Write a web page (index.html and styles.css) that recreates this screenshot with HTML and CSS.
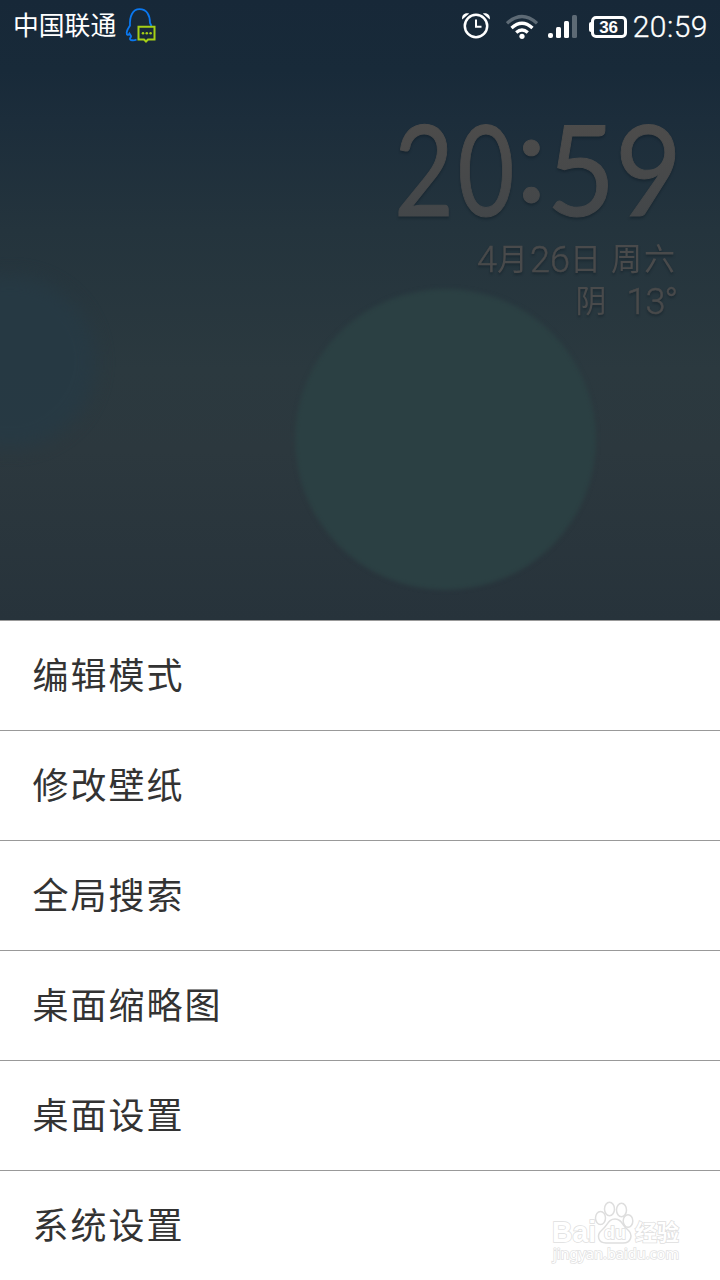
FILE: index.html
```
<!DOCTYPE html>
<html lang="zh-CN">

<head>
    <meta charset="UTF-8">
    <meta name="viewport" content="width=device-width, initial-scale=1.0">
    <title>桌面</title>
    <link rel="stylesheet" href="styles.css">
</head>

<body>
    <section class="desktop">
        <div class="circle green"></div>
        <div class="circle blue"></div>
        <header class="status">
            <div class="status_left">
                <span class="carrier">中国联通</span>
                <svg class="qq" width="32" height="36" viewBox="0 0 32 36" fill="none">
                    <path d="M11.5 31.500C9 32.800 4.500 32.500 5 30.500C5.300 29.300 6.500 29 6 28L4.500 25.500C3.500 27.500 1.500 27.300 1.700 24.500C2 21.500 4 19.500 5 17.500C4.500 8.500 7.500 1.200 14.500 1.200C22 1.200 25 7.500 25 15L26.500 18" stroke="#0a78f0" stroke-width="1.800" />
                    <path d="M13.500 18.700H29.500V31.500H23L21 33.500L19 31.500H13.500Z" stroke="#a5cf16" stroke-width="2" />
                    <g fill="#a5cf16">
                        <circle cx="18" cy="25.300" r="1.300" />
                        <circle cx="21.800" cy="25.300" r="1.300" />
                        <circle cx="25.600" cy="25.300" r="1.300" />
                    </g>
                </svg>
            </div>
            <div class="status_right">
                <svg class="alarm" width="30" height="28" viewBox="0 0 30 28" fill="none" stroke="#fff">
                    <circle cx="15" cy="15" r="11.200" stroke-width="2.500" />
                    <path d="M15 8.500V15.700H20.500" stroke-width="2" />
                    <path d="M1.200 8.500C.3 4 4 1.300 8.200 2.600ZM28.800 8.500C29.700 4 26 1.300 21.800 2.600Z" fill="#fff" stroke="none" />
                </svg>
                <svg class="wifi" width="32" height="26" viewBox="0 0 32 26" fill="none" stroke="#fff" stroke-width="3.300">
                    <path d="M1 9.300Q16-4.300 31 9.300" stroke="#5d6a75" />
                    <path d="M5.500 14Q16 4.500 26.500 14" />
                    <path d="M10.200 18.500Q16 13.500 21.800 18.500" />
                    <circle cx="16" cy="22.300" r="2.600" fill="#fff" stroke="none" />
                </svg>
                <svg class="signal" width="30" height="24" viewBox="0 0 30 24" fill="#fff">
                    <rect x="0" y="18" width="5" height="5" rx="2" />
                    <rect x="8" y="12" width="5" height="11" rx="1.500" />
                    <rect x="16" y="6" width="5" height="17" rx="1.500" />
                    <rect x="24" y="0" width="5" height="23" rx="1.500" fill="#5d6a75" />
                </svg>
                <div class="battery">36</div>
                <span class="time">20:59</span>
            </div>
        </header>
        <div class="clock">
            <svg class="clock_time" width="300" height="112" viewBox="0 0 300 112">
                <defs>
                    <linearGradient id="clock_color" x1="0" y1="0" x2="0" y2="104" gradientUnits="userSpaceOnUse">
                        <stop offset="0" stop-color="#4d4c4b" />
                        <stop offset="1" stop-color="#424649" />
                    </linearGradient>
                </defs>
                <text fill="url(#clock_color)" stroke="url(#clock_color)" stroke-width="1"><tspan x="7" y="96" textLength="60" lengthAdjust="spacingAndGlyphs">2</tspan><tspan x="70.500" y="96" textLength="57" lengthAdjust="spacingAndGlyphs">0</tspan><tspan x="128.500" y="81.500">:</tspan><tspan x="159.500" y="96" textLength="69" lengthAdjust="spacingAndGlyphs">5</tspan><tspan x="228" y="96" textLength="67" lengthAdjust="spacingAndGlyphs">9</tspan></text>
            </svg>
            <p><b>4</b>月<b>26</b>日<i></i>周六</p>
            <p>阴<i class="wide"></i><b class="temp">13°</b></p>
        </div>
    </section>
    <ul class="menu">
        <li>编辑模式</li>
        <li>修改壁纸</li>
        <li>全局搜索</li>
        <li>桌面缩略图</li>
        <li>桌面设置</li>
        <li>系统设置</li>
    </ul>
    <svg class="watermark" width="136" height="74" viewBox="0 0 136 74">
        <g fill="#fff" stroke="#dedede" stroke-width="1.500">
            <text class="mark_name" x="4" y="46" textLength="44" lengthAdjust="spacingAndGlyphs">Bai</text>
            <ellipse cx="52.500" cy="22" rx="5" ry="6.500" />
            <ellipse cx="61.500" cy="13" rx="5" ry="6.800" />
            <ellipse cx="73.500" cy="14" rx="5" ry="6.800" />
            <ellipse cx="80" cy="25" rx="4.800" ry="6.300" />
            <path d="M67 23C74 23 74 29 79 33C86 39 83 47 75 47H58C50 47 48 39 54 34C60 29 60 23 67 23Z" />
            <text class="mark_du" x="56" y="43">du</text>
            <text class="mark_cn" x="87" y="44">经验</text>
        </g>
        <text class="mark_url" x="5" y="63" textLength="126" lengthAdjust="spacingAndGlyphs">jingyan.baidu.com</text>
    </svg>
</body>

</html>
```
FILE: styles.css
```
* {
    margin: 0;
    padding: 0;
    box-sizing: border-box;
}

body {
    position: relative;
    width: 720px;
    height: 1280px;
    overflow: hidden;
    background-color: #fff;
    font-family: Roboto, "Noto Sans CJK SC", sans-serif;
}

.desktop {
    position: relative;
    height: 620px;
    overflow: hidden;
    background: linear-gradient(#172838 0, #182a39 70px, #1c2d3b 120px, #24343d 230px, #2b393f 370px, #2c383e 450px, #27333b 620px);
}

.circle {
    position: absolute;
    border-radius: 50%;
}

.green {
    left: 295px;
    top: 289px;
    width: 301px;
    height: 301px;
    background-color: #2b4043;
    filter: blur(2px);
}

.blue {
    left: -76px;
    top: 276px;
    width: 172px;
    height: 172px;
    background-color: #263a45;
    opacity: .8;
    filter: blur(9px);
}

.status {
    position: relative;
    display: flex;
    justify-content: space-between;
    height: 54px;
    padding: 0 12px 0 13px;
    color: #fff;
}

.status_left,
.status_right {
    display: flex;
    align-items: center;
    height: 52px;
}

.carrier {
    font-size: 25.8px;
    line-height: 52px;
}

.qq {
    margin-left: 9px;
    margin-top: -1px;
}

.alarm {
    margin-right: 15px;
    margin-top: -3px;
}

.wifi {
    margin-right: 10px;
    margin-top: 1px;
}

.signal {
    margin-right: 13px;
    margin-top: 2px;
}

.battery {
    position: relative;
    width: 36px;
    height: 22px;
    margin-top: 2px;
    margin-right: 6px;
    border: 3px solid #fff;
    border-radius: 5px;
    font: bold 17px/17px "Liberation Sans", sans-serif;
    text-align: center;
}

.battery::before {
    content: "";
    position: absolute;
    left: -5px;
    top: 3px;
    width: 3px;
    height: 10px;
    border-radius: 2px 0 0 2px;
    background-color: #fff;
}

.time {
    font-size: 30px;
    font-weight: 300;
    line-height: 54px;
    letter-spacing: .5px;
    margin-top: 2px;
    -webkit-text-stroke: .3px #fff;
}

.clock {
    position: relative;
    display: flex;
    flex-direction: column;
    align-items: flex-end;
    padding: 66px 43px 0 0;
    color: #494a4b;
    filter: drop-shadow(0 2px 1px rgba(10, 20, 28, .35));
}

.clock_time {
    margin-right: -10px;
    margin-bottom: 7px;
    font-family: Lato, sans-serif;
    font-size: 127px;
}

.clock p {
    display: flex;
    height: 42px;
    line-height: 42px;
    font-size: 31px;
    letter-spacing: 2px;
}

.clock b {
    font-size: 36px;
    font-weight: 300;
    letter-spacing: 0;
    -webkit-text-stroke: .5px #494a4b;
}

.clock i {
    width: 8px;
}

.clock .wide {
    width: 18px;
}

.clock .temp {
    letter-spacing: -1px;
}

.menu {
    list-style: none;
}

.menu li {
    height: 110px;
    padding-left: 32.5px;
    border-top: 1px solid #999;
    color: #333;
    font-size: 36px;
    line-height: 113px;
    letter-spacing: 2px;
}

.watermark {
    position: absolute;
    left: 548px;
    top: 1196px;
    font-family: "Liberation Sans", "Noto Sans CJK SC", sans-serif;
    font-weight: bold;
}

.watermark text {
    paint-order: stroke;
}

.mark_name {
    font-size: 29px;
}

.mark_du {
    font-size: 18px;
}

.mark_cn {
    font-size: 22px;
}

.mark_url {
    font-family: "Noto Sans", sans-serif;
    font-size: 14px;
    font-weight: normal;
    fill: #fff;
    stroke: #e2e2e2;
    stroke-width: 1.5px;
}
```
